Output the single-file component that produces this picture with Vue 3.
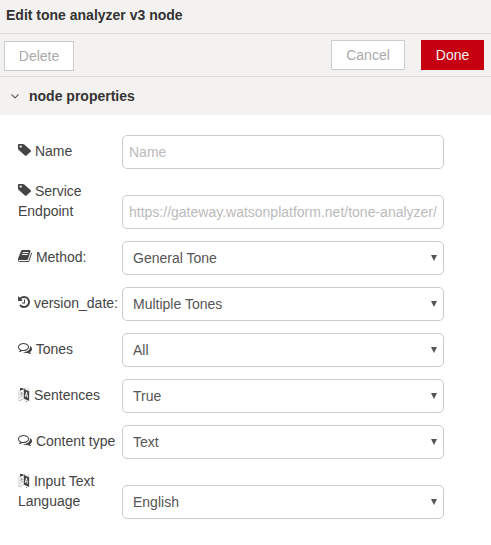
<script setup>
const icons = {
  tag: {
    box: '128 128 1515 1536', w: 13, h: 12,
    d: 'M576 448q0-53-37.5-90.5t-90.5-37.5-90.5 37.5-37.5 90.5 37.5 90.5 90.5 37.5 90.5-37.5 37.5-90.5zm1067 576q0 53-37 90l-491 492q-39 37-91 37-53 0-90-37l-715-716q-38-37-64.5-101t-26.5-117v-416q0-52 38-90t90-38h416q53 0 117 26.5t102 64.5l715 714q37 39 37 91z'
  },
  book: {
    box: '96 128 1640 1536', w: 14, h: 12,
    d: 'M1703 478q40 57 18 129l-275 906q-19 64-76.5 107.5t-122.5 43.5h-923q-77 0-148.5-53.5t-99.5-131.5q-24-67-2-127 0-4 3-27t4-37q1-8-3-21.5t-3-19.5q2-11 8-21t16.5-23.5 16.5-23.5q23-38 45-91.5t30-91.5q3-10 .5-30t-.5-28q3-11 17-28t17-23q21-36 42-92t25-90q1-9-2.5-32t.5-28q4-13 22-30.5t22-22.5q19-26 42.5-84.5t27.5-96.5q1-8-3-25.5t-2-26.5q2-8 9-18t18-23 17-21q8-12 16.5-30.5t15-35 16-36 19.5-32 26.5-23.5 36-11.5 47.5 5.5l-1 3q38-9 51-9h761q74 0 114 56t18 130l-274 906q-36 119-71.5 153.5t-128.5 34.5h-869q-27 0-38 15-11 16-1 43 24 70 144 70h923q29 0 56-15.5t35-41.5l300-987q7-22 5-57 38 15 59 43zm-1064 2q-4 13 2 22.5t20 9.5h608q13 0 25.5-9.5t16.5-22.5l21-64q4-13-2-22.5t-20-9.5h-608q-13 0-25.5 9.5t-16.5 22.5zm-83 256q-4 13 2 22.5t20 9.5h608q13 0 25.5-9.5t16.5-22.5l21-64q4-13-2-22.5t-20-9.5h-608q-13 0-25.5 9.5t-16.5 22.5z'
  },
  history: {
    box: '128 128 1536 1536', w: 12, h: 12,
    d: 'M1664 896q0 156-61 298t-164 245-245 164-298 61q-172 0-327-72.5t-264-204.5q-7-10-6.5-22.5t8.5-20.5l137-138q10-9 25-9 16 2 23 12 73 95 179 147t225 52q104 0 198.5-40.5t163.5-109.5 109.5-163.5 40.5-198.5-40.5-198.5-109.5-163.5-163.5-109.5-198.5-40.5q-98 0-188 35.5t-160 101.5l137 138q31 30 14 69-17 40-59 40h-448q-26 0-45-19t-19-45v-448q0-42 40-59 39-17 69 14l130 129q107-101 244.5-156.5t284.5-55.5q156 0 298 61t245 164 164 245 61 298zm-640-288v448q0 14-9 23t-23 9h-320q-14 0-23-9t-9-23v-64q0-14 9-23t23-9h224v-352q0-14 9-23t23-9h64q14 0 23 9t9 23z'
  },
  comments: {
    box: '0 128 1792 1536', w: 14, h: 12,
    d: 'M704 384q-153 0-286 52t-211.5 141-78.5 191q0 82 53 158t149 132l97 56-35 84q34-20 62-39l44-31 53 10q78 14 153 14 153 0 286-52t211.5-141 78.5-191-78.5-191-211.5-141-286-52zm0-128q191 0 353.5 68.5t256.5 186.5 94 257-94 257-256.5 186.5-353.5 68.5q-86 0-176-16-124 88-278 128-36 9-86 16h-3q-11 0-20.5-8t-11.5-21q-1-3-1-6.5t.5-6.5 2-6l2.5-5 3.5-5.5 4-5 4.5-5 4-4.5q5-6 23-25t26-29.5 22.5-29 25-38.5 20.5-44q-124-72-195-177t-71-224q0-139 94-257t256.5-186.5 353.5-68.5zm822 1169q10 24 20.5 44t25 38.5 22.5 29 26 29.5 23 25q1 1 4 4.5t4.5 5 4 5 3.5 5.5l2.5 5 2 6 .5 6.5-1 6.5q-3 14-13 22t-22 7q-50-7-86-16-154-40-278-128-90 16-176 16-271 0-472-132 58 4 88 4 161 0 309-45t264-129q125-92 192-212t67-254q0-77-23-152 129 71 204 178t75 230q0 120-71 224.5t-195 176.5z'
  },
  language: {
    box: '0 128 1792 1536', w: 12, h: 14,
    d: 'M782 1078q-1 3-12.5-.5t-31.5-11.5l-20-9q-44-20-87-49-7-5-41-31.5t-38-28.5q-67 103-134 181-81 95-105 110-4 2-19.5 4t-18.5 0q6-4 82-92 21-24 85.5-115t78.5-118q17-30 51-98.5t36-77.5q-8-1-110 33-8 2-27.5 7.5t-34.5 9.5-17 5q-2 2-2 10.5t-1 9.5q-5 10-31 15-23 7-47 0-18-4-28-21-4-6-5-23 6-2 24.5-5t29.5-6q58-16 105-32 100-35 102-35 10-2 43-19.5t44-21.5q9-3 21.5-8t14.5-5.5 6 .5q2 12-1 33 0 2-12.5 27t-26.5 53.5-17 33.5q-25 50-77 131l64 28q12 6 74.5 32t67.5 28q4 1 10.5 25.5t4.5 30.5zm-205-486q3 15-4 28-12 23-50 38-30 12-60 12-26-3-49-26-14-15-18-41l1-3q3 3 19.5 5t26.5 0 58-16q36-12 55-14 17 0 21 17zm698 129l63 227-139-42zm-1108 800l694-232v-1032l-694 233v1031zm1241-317l102 31-181-657-100-31-216 536 102 31 45-110 211 65zm-503-962l573 184v-380zm311 1323l158 13-54 160-40-66q-130 83-276 108-58 12-91 12h-84q-79 0-199.5-39t-183.5-85q-8-7-8-16 0-8 5-13.5t13-5.5q4 0 18 7.5t30.5 16.5 20.5 11q73 37 159.5 61.5t157.5 24.5q95 0 167-14.5t157-50.5q15-7 30.5-15.5t34-19 28.5-16.5zm448-1079v1079l-774-246q-14 6-375 127.5t-368 121.5q-13 0-18-13 0-1-1-3v-1078q3-9 4-10 5-6 20-11 107-36 149-50v-384l558 198q2 0 160.5-55t316-108.5 161.5-53.5q20 0 20 21v418z'
  }
}

const rows = [
  { id: 'name', icon: 'tag', label: 'Name', placeholder: 'Name' },
  { id: 'endpoint', icon: 'tag', label: 'Service Endpoint', placeholder: 'https://gateway.watsonplatform.net/tone-analyzer/' },
  { id: 'method', icon: 'book', label: 'Method:', value: 'General Tone' },
  { id: 'version', icon: 'history', label: 'version_date:', value: 'Multiple Tones' },
  { id: 'tones', icon: 'comments', label: 'Tones', value: 'All' },
  { id: 'sentences', icon: 'language', label: 'Sentences', value: 'True' },
  { id: 'content', icon: 'comments', label: 'Content type', value: 'Text' },
  { id: 'lang', icon: 'language', label: 'Input Text Language', value: 'English' }
]
</script>

<template>
  <div class="tray">
    <div class="title">Edit tone analyzer v3 node</div>
    <div class="toolbar">
      <button class="btn delete">Delete</button>
      <div class="right">
        <button class="btn cancel">Cancel</button>
        <button class="btn done">Done</button>
      </div>
    </div>
    <div class="section">
      <svg class="chevron" width="8" height="5" viewBox="0 0 8 5">
        <polyline points="0.5,0.5 4,4 7.5,0.5" />
      </svg>
      <span>node properties</span>
    </div>
    <form class="form">
      <div class="row" v-for="r in rows" :key="r.id">
        <label class="label" :for="r.id">
          <span class="icon-slot">
            <svg class="icon" :width="icons[r.icon].w" :height="icons[r.icon].h" :viewBox="icons[r.icon].box" preserveAspectRatio="none">
              <path :d="icons[r.icon].d" />
            </svg>
          </span>
          {{ r.label }}
        </label>
        <input v-if="r.placeholder" class="field" :id="r.id" type="text" :placeholder="r.placeholder" />
        <div v-else class="select-wrap">
          <select class="field select" :id="r.id">
            <option>{{ r.value }}</option>
          </select>
        </div>
      </div>
    </form>
  </div>
</template>

<style scoped>
.tray {
  font-family: "Liberation Sans", Arial, sans-serif;
  font-size: 14px;
  color: #444;
}

.title {
  height: 33px;
  line-height: 31px;
  padding-left: 6px;
  font-weight: bold;
  color: #333;
  background: #f3f2f1;
  border-bottom: 1px solid #ddd;
}

.toolbar {
  height: 43px;
  display: flex;
  justify-content: space-between;
  align-items: flex-start;
  padding: 6px 7px 0 4px;
  box-sizing: border-box;
  background: #f3f2f1;
  border-bottom: 1px solid #ddd;
}

.right {
  display: flex;
  gap: 16px;
}

.btn {
  height: 30px;
  padding: 0;
  font: inherit;
  box-sizing: border-box;
  background: #fff;
  border: 1px solid #ccc;
  color: #aaa;
}

.delete {
  width: 70px;
  margin-top: 1px;
}

.cancel {
  width: 74px;
}

.done {
  width: 63px;
  background: #c70011;
  border-color: #c70011;
  color: #eee;
}

.section {
  height: 38px;
  display: flex;
  align-items: center;
  padding-left: 11px;
  font-weight: bold;
  color: #333;
  background: #f3f2f1;
}

.chevron {
  margin-right: 10px;
  fill: none;
  stroke: #666;
  stroke-width: 1.2;
}

.form {
  padding: 20px 47px 0 18px;
}

.row {
  display: flex;
  align-items: flex-end;
  gap: 4px;
  margin-bottom: 12px;
}

.label {
  width: 100px;
  flex: none;
  line-height: 20px;
  margin-bottom: 8px;
}

.icon-slot {
  display: inline-block;
  height: 14px;
  line-height: 14px;
  vertical-align: -2px;
}

.icon {
  display: block;
  fill: #444;
}

.field {
  width: 100%;
  height: 34px;
  box-sizing: border-box;
  padding: 0 6px;
  font: inherit;
  color: #555;
  background: #fff;
  border: 1px solid #ccc;
  border-radius: 5px;
  outline: none;
}

.field::placeholder {
  color: #bbb;
  opacity: 1;
}

.select-wrap {
  flex: 1;
  position: relative;
}

.select {
  appearance: none;
  padding: 0 10px;
}

.select-wrap::after {
  content: "";
  position: absolute;
  right: 7px;
  top: 14px;
  border-left: 3.5px solid transparent;
  border-right: 3.5px solid transparent;
  border-top: 6px solid #555;
  pointer-events: none;
}
</style>

<style>
body {
  background: #fff;
}
</style>
